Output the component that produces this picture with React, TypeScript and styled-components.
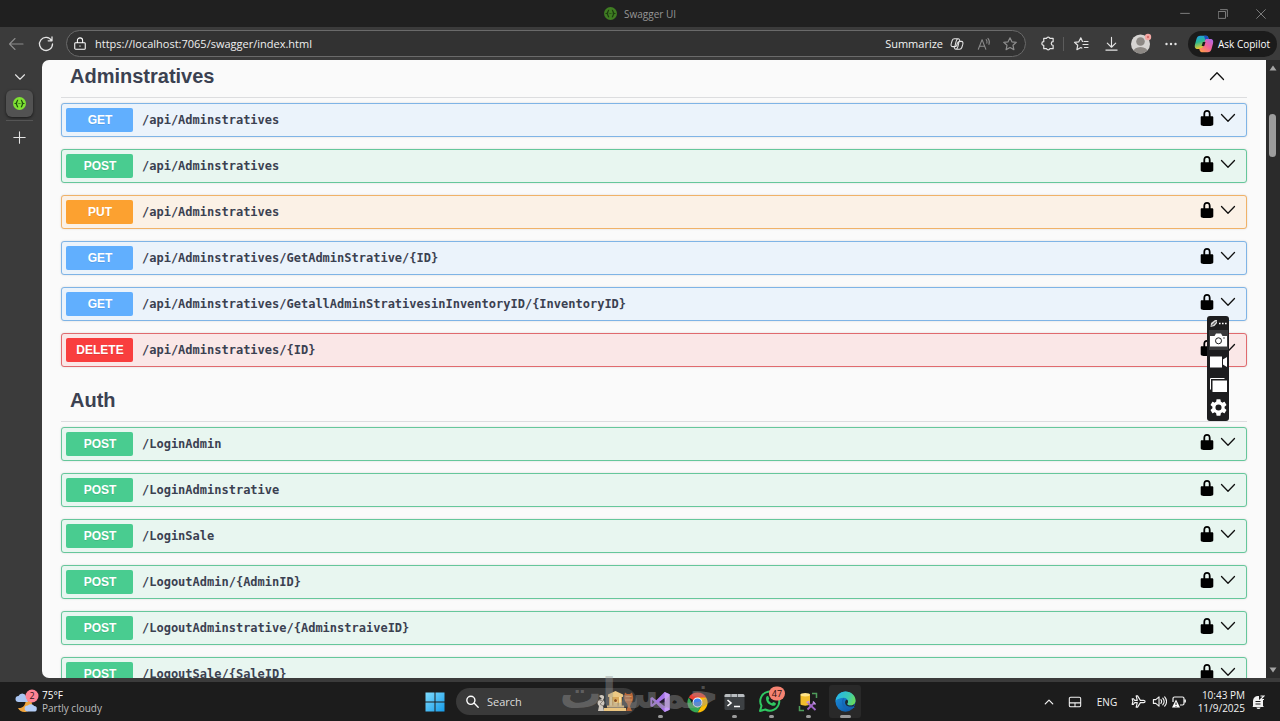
import React from "react";
import styled, { createGlobalStyle } from "styled-components";

const Global = createGlobalStyle`
  * { box-sizing: border-box; }
  html, body { margin: 0; padding: 0; background: #1c1c1c; }
  button, input { font: inherit; color: inherit; border: 0; padding: 0; margin: 0; background: none; outline: 0; }
  button { cursor: pointer; }
  svg { display: block; flex: none; }
`;

const ui = `"Open Sans", "Noto Sans", sans-serif`;

const Screen = styled.div`
  position: relative;
  display: flex;
  flex-direction: column;
  height: 100vh;
  overflow: hidden;
  background: #3b3b3b;
  color: #fff;
  font-family: ${ui};
  font-size: 11px;
`;

/* ---------- title bar ---------- */
const TitleBar = styled.header`
  display: grid;
  grid-template-columns: 1fr auto 1fr;
  align-items: center;
  flex: none;
  height: 27px;
  background: #202020;
  color: #969696;
  font-size: 10px;
`;
const Title = styled.div`
  grid-column: 2;
  display: flex;
  align-items: center;
  gap: 7px;
`;
const WindowButtons = styled.div`
  display: flex;
  justify-content: flex-end;
`;
const WindowButton = styled.button`
  display: grid;
  place-items: center;
  width: 38px;
  height: 27px;
  color: #7c7c7c;
`;

/* ---------- toolbar ---------- */
const Toolbar = styled.nav`
  display: flex;
  align-items: center;
  flex: none;
  height: 33px;
  padding: 0 3px 0 1px;
`;
const IconButton = styled.button<{ $dim?: boolean; $w?: number }>`
  display: grid;
  place-items: center;
  flex: none;
  width: ${(p) => p.$w ?? 30}px;
  height: 26px;
  color: ${(p) => (p.$dim ? "#8c8c8c" : "#e4e4e4")};
`;
const Address = styled.div`
  display: flex;
  align-items: center;
  flex: 1;
  min-width: 0;
  height: 27px;
  margin: 0 6px 0 5px;
  padding: 0 2px 0 6px;
  border: 1px solid #6a6a6a;
  border-radius: 14px;
  background: #323232;
`;
const AddressInput = styled.input`
  flex: 1;
  min-width: 0;
  margin-left: 8px;
  font-size: 11px;
  color: #efefef;
`;
const Summarize = styled.button`
  font-size: 11px;
  color: #f2f2f2;
`;
const Separator = styled.span`
  width: 1px;
  height: 14px;
  margin: 0 2px 0 1px;
  background: #5c5c5c;
`;
const AskCopilot = styled.button`
  display: flex;
  align-items: center;
  gap: 4px;
  flex: none;
  width: 89px;
  height: 26px;
  margin-left: 2px;
  padding-left: 6px;
  border-radius: 13px;
  background: #1b1b1b;
  font-size: 10px;
  white-space: nowrap;
`;

/* ---------- body ---------- */
const Body = styled.div`
  display: flex;
  flex: 1;
  min-height: 0;
  padding-bottom: 4px;
`;
const Sidebar = styled.aside`
  display: flex;
  flex-direction: column;
  align-items: center;
  flex: none;
  width: 42px;
  padding: 4px 3px 0 0;
`;
const Tab = styled.button`
  display: grid;
  place-items: center;
  width: 27px;
  height: 27px;
  border-radius: 6px;
  background: #525252;
  box-shadow: 0 1px 3px rgba(0, 0, 0, 0.6);
`;
const TabLine = styled.span`
  width: 27px;
  height: 1px;
  margin: 3px 0;
  background: #555;
`;
const Page = styled.main`
  flex: 1;
  min-width: 0;
  overflow: hidden;
  border-radius: 7px 0 0 7px;
  background: #fafafa;
  color: #3b4151;
`;
const Sections = styled.div`
  margin-top: -5px;
  padding: 0 19px;
`;
const TagHeader = styled.button`
  display: flex;
  align-items: center;
  justify-content: space-between;
  width: 100%;
  height: 43px;
  margin-bottom: 5px;
  padding: 0 22px 0 9px;
  border-bottom: 1px solid #dcdddf;
  color: #3b4151;
`;
const TagTitle = styled.h3`
  margin: 0;
  font: bold 20px/24px "Liberation Sans", sans-serif;
`;

type Method = "GET" | "POST" | "PUT" | "DELETE";
const palette: Record<Method, { main: string; line: string; tint: string }> = {
  GET: { main: "#61affe", line: "#7fb4e6", tint: "#ebf3fb" },
  POST: { main: "#49cc90", line: "#66c79b", tint: "#e8f6f0" },
  PUT: { main: "#fca130", line: "#f0b268", tint: "#fbf1e6" },
  DELETE: { main: "#f93e3e", line: "#e06a6e", tint: "#fae7e7" },
};

const Operation = styled.div<{ $method: Method }>`
  display: flex;
  align-items: center;
  height: 34px;
  margin-bottom: 12px;
  padding: 0 7px 0 4px;
  border: 1px solid ${(p) => palette[p.$method].line};
  border-radius: 3px;
  background: ${(p) => palette[p.$method].tint};
  box-shadow: 0 0 2px rgba(0, 0, 0, 0.15);
`;
const Summary = styled.button`
  display: flex;
  align-items: center;
  flex: 1;
  min-width: 0;
  text-align: left;
`;
const MethodBadge = styled.span<{ $method: Method }>`
  width: 67px;
  padding-left: 1px;
  border-radius: 2px;
  background: ${(p) => palette[p.$method].main};
  color: #fff;
  font: bold 12px/24px "Liberation Sans", sans-serif;
  text-align: center;
  text-shadow: 0 1px 0 rgba(0, 0, 0, 0.1);
`;
const Path = styled.span`
  padding-left: 9px;
  color: #3b4151;
  font: bold 12px/24px "DejaVu Sans Mono", monospace;
`;
const RowIcon = styled.button<{ $w: number }>`
  display: grid;
  place-items: center;
  width: ${(p) => p.$w}px;
  height: 24px;
  padding-bottom: 4px;
  color: #000;
`;

const Scrollbar = styled.div`
  display: flex;
  flex-direction: column;
  align-items: center;
  flex: none;
  width: 14px;
  padding: 5px 1px 5px 0;
  background: #2b2b2b;
`;
const Thumb = styled.span`
  width: 7px;
  height: 43px;
  margin: 43px 0 auto;
  border-radius: 4px;
  background: #9d9d9d;
`;

/* ---------- capture tool floating over the page ---------- */
const CaptureBar = styled.div`
  position: absolute;
  top: 316px;
  right: 51px;
  display: flex;
  flex-direction: column;
  align-items: center;
  width: 22px;
  height: 105px;
  padding-top: 1px;
  border-radius: 3px;
  background: #1d1d1f;
`;
const CaptureButton = styled.button<{ $active?: boolean; $h?: number }>`
  display: grid;
  place-items: center;
  width: 19px;
  height: ${(p) => p.$h ?? 23}px;
  background: ${(p) => (p.$active ? "#3a3a3c" : "none")};
`;

/* ---------- taskbar ---------- */
const Taskbar = styled.footer`
  display: grid;
  grid-template-columns: 1fr auto 1fr;
  align-items: center;
  flex: none;
  height: 39px;
  background: #1c1c1c;
`;
const Weather = styled.button`
  display: flex;
  align-items: center;
  gap: 3px;
  padding-left: 15px;
  text-align: left;
  font-size: 10px;
  line-height: 13px;
`;
const Muted = styled.span`
  display: block;
  color: #bdbdbd;
`;
const Dock = styled.div`
  display: flex;
  align-items: center;
  gap: 5px;
`;
const DockItem = styled.button<{ $active?: boolean }>`
  display: flex;
  flex-direction: column;
  align-items: center;
  justify-content: flex-end;
  gap: 2px;
  width: 32px;
  height: 33px;
  border-radius: 3px;
  background: ${(p) => (p.$active ? "#292929" : "none")};
`;
const Running = styled.span<{ $wide?: boolean; $off?: boolean }>`
  width: ${(p) => (p.$wide ? 11 : 5)}px;
  height: 3px;
  border-radius: 2px;
  background: ${(p) => (p.$off ? "transparent" : "#9a9a9a")};
`;
const StartButton = styled.button`
  display: grid;
  place-items: center;
  width: 32px;
  height: 33px;
`;
const SearchBox = styled.label`
  display: flex;
  align-items: center;
  gap: 8px;
  width: 181px;
  height: 27px;
  margin-right: 2px;
  padding: 0 3px 0 10px;
  border-radius: 14px;
  background: #3a3a3a;
`;
const SearchInput = styled.input`
  flex: 1;
  min-width: 0;
  font-size: 11px;
  &::placeholder { color: #dcdcdc; opacity: 1; }
`;
const Tray = styled.div`
  display: flex;
  align-items: center;
  justify-content: flex-end;
  padding-right: 14px;
  font-size: 10px;
  color: #f2f2f2;
`;
const TrayButton = styled.button<{ $w: number }>`
  display: grid;
  place-items: center;
  width: ${(p) => p.$w}px;
  height: 30px;
`;
const Clock = styled.button`
  width: 50px;
  margin: 0 5px 0 6px;
  line-height: 13px;
  text-align: right;
  white-space: nowrap;
`;
const Watermark = styled.div`
  position: absolute;
  right: 561px;
  bottom: 5px;
  color: rgba(150, 150, 150, 0.42);
  font: bold 42px/44px "DejaVu Sans", sans-serif;
  white-space: nowrap;
  pointer-events: none;
`;

/* ---------- icons ---------- */
const Line = ({ size = 14, w = 1.2, d, vb = 16 }: { size?: number; w?: number; d: string; vb?: number }) => (
  <svg width={size} height={size} viewBox={`0 0 ${vb} ${vb}`} fill="none" stroke="currentColor" strokeWidth={w} strokeLinecap="round" strokeLinejoin="round">
    <path d={d} />
  </svg>
);

const SwaggerIcon = ({ color, ink }: { color: string; ink: string }) => (
  <svg width="13" height="13" viewBox="0 0 24 24">
    <circle cx="12" cy="12" r="12" fill={color} />
    <path d="M9.5 5.500C6.600 5.500 8.300 11 5 12c3.300 1 1.600 6.500 4.500 6.500M14.500 5.500c2.900 0 1.200 5.500 4.500 6.500-3.300 1-1.600 6.500-4.500 6.500" fill="none" stroke={ink} strokeWidth="2.200" />
    <path d="M9 12h1M11.600 12h1M14.200 12h1" stroke={ink} strokeWidth="2" />
  </svg>
);

const LockSolid = () => (
  <svg width="18" height="18" viewBox="0 0 20 20" fill="currentColor">
    <path d="M15.8 8H14V5.600C14 2.703 12.665 1 10 1 7.334 1 6 2.703 6 5.600V8H4c-.553 0-1 .646-1 1.199V17c0 .549.428 1.139.951 1.307l1.197.387C5.672 18.861 6.550 19 7.100 19h5.800c.549 0 1.428-.139 1.951-.307l1.196-.387c.524-.167.953-.757.953-1.306V9.199C17 8.646 16.352 8 15.800 8zM12 8H8V5.199C8 3.754 8.797 3 10 3c1.203 0 2 .754 2 2.199V8z" />
  </svg>
);

const Chevron = ({ up }: { up?: boolean }) => (
  <svg width="16" height="10" viewBox="0 0 16 10" fill="none" stroke="#111" strokeWidth="1.300" strokeLinecap="round" strokeLinejoin="round">
    <path d={up ? "M1.500 8.500L8 1.800l6.500 6.700" : "M1.500 1.500L8 8.200l6.500-6.700"} />
  </svg>
);

const CopilotIcon = () => (
  <svg width="20" height="18" viewBox="0 0 24 22">
    <defs>
      <linearGradient id="cpA" x1="0" y1="0" x2="0.300" y2="1">
        <stop offset="0" stopColor="#1f9bf0" />
        <stop offset="0.500" stopColor="#2bb98f" />
        <stop offset="1" stopColor="#f0c92b" />
      </linearGradient>
      <linearGradient id="cpB" x1="1" y1="0" x2="0.200" y2="1">
        <stop offset="0" stopColor="#a66bf0" />
        <stop offset="0.500" stopColor="#ef5f9d" />
        <stop offset="1" stopColor="#ff9a4a" />
      </linearGradient>
    </defs>
    <path d="M7.500 1h7.200c1.500 0 2.200 1 2.700 2.600l.7 2.400h-2.300c-1.800 0-2.500 1-3 2.600l-2 6.400c-.5 1.500-1.300 2-2.800 2H4.500C1 17 .2 14.500 1 11.500l1.900-6.800C3.600 2.200 5 1 7.500 1z" fill="url(#cpA)" />
    <path d="M14.700 1c1.500 0 2.200 1 2.700 2.600l.7 2.400h-4.600l-1-3.500C12.200 1.600 11.800 1 11 1z" fill="#1d4fc4" />
    <path d="M16.500 21H9.300c-1.500 0-2.200-1-2.700-2.600L5.900 16h2.300c1.800 0 2.500-1 3-2.600l2-6.400c.5-1.500 1.300-2 2.800-2h3.500c3.500 0 4.300 2.500 3.500 5.500l-1.900 6.800C20.400 19.800 19 21 16.500 21z" fill="url(#cpB)" />
    <path d="M10.600 8.500h3.200l-1.500 5h-3.200z" fill="#1b1b1b" />
  </svg>
);

const Avatar = () => (
  <svg width="22" height="22" viewBox="0 0 22 22">
    <defs><clipPath id="avatarClip"><circle cx="10.500" cy="11" r="9.500" /></clipPath></defs>
    <circle cx="10.500" cy="11" r="9.500" fill="#d6d4d2" />
    <g clipPath="url(#avatarClip)" fill="#8d8985">
      <circle cx="10.500" cy="8.500" r="4.300" />
      <ellipse cx="10.500" cy="19.500" rx="7.500" ry="5.500" />
    </g>
    <circle cx="18" cy="4" r="3.200" fill="#f3a9a5" />
    <circle cx="18" cy="4" r="1.200" fill="#d9716e" />
  </svg>
);

const Gear = () => (
  <svg width="17" height="17" viewBox="2 2 20 20" fill="#fff">
    <path d="M19.140 12.940c.04-.3.06-.61.06-.94 0-.32-.02-.64-.07-.94l2.030-1.580a.49.49 0 0 0 .12-.61l-1.920-3.320a.49.49 0 0 0-.59-.22l-2.390.96a7 7 0 0 0-1.620-.94l-.36-2.540a.48.48 0 0 0-.48-.41h-3.840c-.24 0-.43.17-.47.41l-.36 2.540c-.59.24-1.130.57-1.620.94l-2.390-.96a.49.49 0 0 0-.59.22L2.740 8.870c-.12.21-.08.47.12.61l2.030 1.580c-.05.3-.09.63-.09.94s.02.64.07.94l-2.030 1.580a.49.49 0 0 0-.12.61l1.920 3.320c.12.22.37.29.59.22l2.390-.96c.5.38 1.030.7 1.620.94l.36 2.540c.05.24.24.41.48.41h3.840c.24 0 .44-.17.47-.41l.36-2.540a7 7 0 0 0 1.620-.94l2.390.96c.22.08.47 0 .59-.22l1.920-3.320a.49.49 0 0 0-.12-.61l-2.010-1.580zM12 15.600a3.600 3.600 0 1 1 0-7.200 3.600 3.600 0 0 1 0 7.200z" />
  </svg>
);

const WeatherIcon = () => (
  <svg width="24" height="26" viewBox="0 0 24 26">
    <path d="M10.500 10c1 6-3 9.500-7.500 9 2 4.500 7.500 5 11 2.500 3.500-2.600 4-8.500 1-11.500-1.300-1-3-.9-4.500 0z" fill="#f0a43c" />
    <path d="M3.500 13a3 3 0 0 1 0-6A4 4 0 0 1 11 7l2 6z" fill="#a9c5f2" />
    <path d="M12.500 22.500a3 3 0 0 1 .3-6 4 4 0 0 1 6.400.6 2.700 2.700 0 0 1-.2 5.400z" fill="#b4cdf6" />
    <circle cx="17" cy="7" r="6.500" fill="#ff8494" />
    <text x="17" y="10" textAnchor="middle" fontSize="9" fontFamily="Open Sans, sans-serif" fill="#331418">2</text>
  </svg>
);

const WindowsIcon = () => (
  <svg width="20" height="20" viewBox="0 0 20 20">
    <defs>
      <linearGradient id="win" x1="0" y1="0" x2="1" y2="1">
        <stop offset="0" stopColor="#7fdcff" />
        <stop offset="1" stopColor="#159be8" />
      </linearGradient>
    </defs>
    <path d="M.5.500h9v9h-9zM10.500.500h9v9h-9zM.5 10.500h9v9h-9zM10.500 10.500h9v9h-9z" fill="url(#win)" />
  </svg>
);

const TempleIcon = () => (
  <svg width="38" height="23" viewBox="0 0 38 23">
    <path d="M3 6c2-2 6-1 5 2l-1 2c2 2 2 4 0 6l1 5H2l1-5c-2-2-2-4 0-6l3-1z" fill="#cfc8be" />
    <path d="M3 10l4 1-3 3 3 2" stroke="#8d857c" fill="none" />
    <path d="M12 4.500L19.500 1 27 4.500V7H12z" fill="#edc984" />
    <path d="M13 7h13v9H13z" fill="#d9a85a" />
    <path d="M14 7h2v9h-2zM23 7h2v9h-2z" fill="#f6dc9e" />
    <path d="M17.500 16v-5a2 2 0 0 1 4 0v5z" fill="#f3d08a" />
    <circle cx="19.500" cy="10.500" r="1.500" fill="#8a4d20" />
    <path d="M11 15.500h17v2H11zM8 18h22v3H8z" fill="#ecc680" />
    <path d="M29 2.500L31 4h3l2-1.500c1.500 4 2 8-1 11l-1 3 2 4.500h-6l2-4.500-1-3c-3.500-3-3-7-2-11z" fill="#b9683a" />
    <path d="M29.500 6.500h6M29 10h7" stroke="#dd965e" />
  </svg>
);

const VisualStudioIcon = () => (
  <svg width="22" height="22" viewBox="0 0 24 24">
    <path d="M17 1l5.500 2.500v17L17 23l-9-9-4.500 3.500L1.500 16.500v-9L3.500 6.500 8 10z" fill="#a673e8" />
    <path d="M17 1l5.500 2.500v17L17 23z" fill="#c59bf5" />
    <path d="M17 7.500v9L11 12zM3.500 9.500v5L6 12z" fill="#241a30" />
  </svg>
);

const ChromeIcon = () => (
  <svg width="21" height="21" viewBox="0 0 24 24">
    <path d="M12 12L2.040 6.250A11.500 11.500 0 0 1 21.960 6.250z" fill="#ea4335" />
    <path d="M12 12V6.250h9.960A11.500 11.500 0 0 1 12 23.500l5-8.600z" fill="#fbbc05" />
    <path d="M12 12l5 2.900-5 8.600A11.500 11.500 0 0 1 2.040 6.250l5 8.650z" fill="#34a853" />
    <circle cx="12" cy="12" r="5.700" fill="#fff" />
    <circle cx="12" cy="12" r="4.500" fill="#3f83ee" />
  </svg>
);

const TerminalIcon = () => (
  <svg width="21" height="20" viewBox="0 0 21 20">
    <rect x="0.500" y="1" width="20" height="16" rx="1.500" fill="#3d4144" />
    <path d="M.5 4V2.500A1.500 1.500 0 0 1 2 1h17a1.500 1.500 0 0 1 1.500 1.500V4z" fill="#b8bcbf" />
    <path d="M7 1v3M13.500 1v3" stroke="#5d6164" />
    <path d="M3.500 7l3.500 3-3.500 3M10 13.500h6" fill="none" stroke="#fff" strokeWidth="1.600" />
  </svg>
);

const WhatsAppIcon = () => (
  <svg width="28" height="27" viewBox="0 0 28 27">
    <path d="M3 25l1.500-5.200A9.500 9.500 0 1 1 8.300 23.500z" fill="none" stroke="#2fc861" strokeWidth="2" strokeLinejoin="round" />
    <path d="M9.300 11c.6-1.300 1.700-1.300 2.100-.5l.8 1.900c.1.500-.8 1.300-.8 1.600.8 1.600 2 2.600 3.600 3.200.4 0 1-1.200 1.500-1.100l2 .9c.7.400.3 1.700-.3 2.200-1.500 1.200-4 .5-6-.9-1.900-1.400-3.900-4.300-2.900-7.300z" fill="#2fc861" />
    <rect x="12" y="0.500" width="16" height="14" rx="7" fill="#f58372" />
    <text x="20" y="11" textAnchor="middle" fontSize="9" fontFamily="Open Sans, sans-serif" fill="#2b0f0b">47</text>
  </svg>
);

const SqlIcon = () => (
  <svg width="20" height="21" viewBox="0 0 20 21">
    <path d="M14 1.500h4.500V6M1.500 14v4.500H6" fill="none" stroke="#4f9d5b" strokeWidth="1.500" />
    <path d="M2.500 2.500h9.500v10c-2 1.500-7.500 1.500-9.500 0z" fill="#f2bd2c" />
    <ellipse cx="7.250" cy="2.700" rx="4.750" ry="1.700" fill="#ffe489" />
    <path d="M9.500 17.500l7-7M10 11l7.500 7" stroke="#a166c9" strokeWidth="1.800" />
    <path d="M8.500 10.500l3-1M15 9.500l2.500 3" stroke="#c193e2" strokeWidth="1.500" />
  </svg>
);

const EdgeIcon = () => (
  <svg width="21" height="22" viewBox="0 0 24 25">
    <defs>
      <linearGradient id="edgeTop" x1="0" y1="0.300" x2="1" y2="0.600">
        <stop offset="0" stopColor="#26b5ea" />
        <stop offset="0.600" stopColor="#39c9b4" />
        <stop offset="1" stopColor="#6bdc58" />
      </linearGradient>
      <linearGradient id="edgeLow" x1="0" y1="0" x2="1" y2="1">
        <stop offset="0" stopColor="#1b93e0" />
        <stop offset="1" stopColor="#0c4f9f" />
      </linearGradient>
    </defs>
    <circle cx="12" cy="12" r="11.500" fill="url(#edgeLow)" />
    <path d="M.7 11C1.300 4.800 6.200.500 12 .500c6.500 0 11.500 4.800 11.500 10.300 0 3.600-2.700 5.700-5.700 5.700-2.300 0-4-.8-4-1.800 0-.7 1.100-1 1.100-2.900 0-2.300-2-4.300-4.900-4.300C6 7.500 2.500 9 .7 11z" fill="url(#edgeTop)" />
    <path d="M10 8.500c-2.500 2.500-2 9 4 10.800 3 .9 6 .1 8-1.100" fill="none" stroke="#1565b4" strokeWidth="1.600" />
    <path d="M14.900 11.800c0 1.900-1.100 2.200-1.100 2.900 0 1 1.700 1.800 4 1.800 2 0 3.600-.8 4.600-2.100l-.8 2.400c-2.300 1.500-6.600 1.200-8.900-.6-2-2.300-1.200-5 .2-6.200 1.200.2 2 1 2 1.800z" fill="#1d2a33" />
  </svg>
);

/* ---------- data ---------- */
const sections: { name: string; open: boolean; operations: [Method, string][] }[] = [
  {
    name: "Adminstratives",
    open: true,
    operations: [
      ["GET", "/api/Adminstratives"],
      ["POST", "/api/Adminstratives"],
      ["PUT", "/api/Adminstratives"],
      ["GET", "/api/Adminstratives/GetAdminStrative/{ID}"],
      ["GET", "/api/Adminstratives/GetallAdminStrativesinInventoryID/{InventoryID}"],
      ["DELETE", "/api/Adminstratives/{ID}"],
    ],
  },
  {
    name: "Auth",
    open: true,
    operations: [
      ["POST", "/LoginAdmin"],
      ["POST", "/LoginAdminstrative"],
      ["POST", "/LoginSale"],
      ["POST", "/LogoutAdmin/{AdminID}"],
      ["POST", "/LogoutAdminstrative/{AdminstraiveID}"],
      ["POST", "/LogoutSale/{SaleID}"],
    ],
  },
];

const star = "M8 1.800l1.900 4 4.400.5-3.300 3 .9 4.300L8 11.500l-3.900 2.100.9-4.300-3.300-3 4.400-.5z";

export default function App() {
  return (
    <Screen>
      <Global />
      <TitleBar>
        <Title>
          <SwaggerIcon color="#3f7d22" ink="#1c3a10" />
          Swagger UI
        </Title>
        <WindowButtons>
          <WindowButton aria-label="Minimize"><Line size={10} d="M1 7h14" w={1.600} /></WindowButton>
          <WindowButton aria-label="Restore"><Line size={10} d="M1 4h11v11H1zM4 1h11v11" w={1.600} /></WindowButton>
          <WindowButton aria-label="Close"><Line size={10} d="M1 1l14 14M15 1L1 15" w={1.600} /></WindowButton>
        </WindowButtons>
      </TitleBar>

      <Toolbar aria-label="Browser">
        <IconButton $dim aria-label="Back"><Line size={16} d="M15 8H1.500M7 2.500L1.500 8 7 13.500" w={1.100} /></IconButton>
        <IconButton aria-label="Reload"><Line size={16} d="M13.500 4.500A6.500 6.500 0 1 0 14.500 8M14 1v3.800h-3.800" w={1.300} /></IconButton>
        <Address>
          <Line d="M3 6.500h10a1 1 0 0 1 1 1V13a1 1 0 0 1-1 1H3a1 1 0 0 1-1-1V7.500a1 1 0 0 1 1-1zM5 6.500V4a3 3 0 0 1 6 0v2.500M8 10v.6" />
          <AddressInput aria-label="Address" defaultValue="https://localhost:7065/swagger/index.html" />
          <Summarize>Summarize</Summarize>
          <IconButton $w={28} aria-label="Copilot summary">
            <Line d="M5 2h4.500c1 0 1.300.8 1.500 1.800L11.300 5H13c2 0 2 2 1.600 3.500l-1.100 3.500c-.5 1.500-1 2-2.500 2H6.500c-1 0-1.300-.8-1.500-1.800L4.700 11H3c-2 0-2-2-1.600-3.500L2.500 4C3 2.500 3.500 2 5 2zM11.300 5c-2 0-2.300.5-2.800 2l-1 3c-.4 1-.8 1-2.800 1M9.500 2c-1.500 0-2 1-2.500 3l-1.500 6M6.500 14c1.500 0 2-1 2.500-3l1.500-6" />
          </IconButton>
          <IconButton $dim $w={26} aria-label="Read aloud"><Line d="M1.500 14L5.800 3l4.300 11M3 10.500h5.600M10.500 3c1 1 1.200 2.500.8 4M12.500 1.500c1.800 2 2 4.500 1.200 7" /></IconButton>
          <IconButton $dim $w={26} aria-label="Favorite"><Line size={16} d={star} /></IconButton>
        </Address>
        <IconButton aria-label="Extensions"><Line size={15} d="M4 2.500h3a1.800 1.800 0 0 1 3.500 0H14V6a2 2 0 1 0 0 4v3.500h-3.500a1.800 1.800 0 0 1-3.500 0H4V10a2 2 0 1 1 0-4z" w={1.300} /></IconButton>
        <Separator />
        <IconButton aria-label="Favorites list"><Line size={16} d="M9.500 5.500L7.800 1.800 5.800 5.800l-4.300.5 3.200 3-.8 4.400 3.900-2.200 1 .6M11 5.500h4M10 8.500h5M11.500 11.500H15" /></IconButton>
        <IconButton aria-label="Downloads"><Line size={15} d="M8 1.500v10M3.500 7.500L8 12l4.500-4.500M2 15h12" /></IconButton>
        <IconButton aria-label="Profile"><Avatar /></IconButton>
        <IconButton aria-label="More">
          <svg width="12" height="4" viewBox="0 0 12 4" fill="currentColor"><circle cx="1.500" cy="2" r="1.200" /><circle cx="6" cy="2" r="1.200" /><circle cx="10.500" cy="2" r="1.200" /></svg>
        </IconButton>
        <AskCopilot><CopilotIcon />Ask Copilot</AskCopilot>
      </Toolbar>

      <Body>
        <Sidebar>
          <IconButton $w={27} aria-label="Tab list"><Line size={12} d="M2 5l6 6 6-6" w={1.500} /></IconButton>
          <Tab aria-label="Swagger UI tab"><SwaggerIcon color="#7fe233" ink="#1c4b0d" /></Tab>
          <TabLine />
          <IconButton $w={27} aria-label="New tab"><Line size={13} d="M8 1v14M1 8h14" w={1.300} /></IconButton>
        </Sidebar>

        <Page>
          <Sections>
            {sections.map((s, i) => (
              <section key={s.name}>
                <TagHeader aria-expanded={s.open}>
                  <TagTitle>{s.name}</TagTitle>
                  <Chevron up={s.open} />
                </TagHeader>
                {s.operations.map(([method, path], n) => (
                  <Operation key={`${i}-${n}`} $method={method}>
                    <Summary>
                      <MethodBadge $method={method}>{method}</MethodBadge>
                      <Path>{path}</Path>
                    </Summary>
                    <RowIcon $w={20} aria-label="Authorize"><LockSolid /></RowIcon>
                    <RowIcon $w={22} aria-label="Expand"><Chevron /></RowIcon>
                  </Operation>
                ))}
              </section>
            ))}
          </Sections>
        </Page>

        <Scrollbar>
          <svg width="8" height="6" viewBox="0 0 8 6"><path d="M4 .5L7.500 5.500h-7z" fill="#a4a4a4" /></svg>
          <Thumb />
          <svg width="8" height="6" viewBox="0 0 8 6"><path d="M4 5.500L7.500.5h-7z" fill="#a4a4a4" /></svg>
        </Scrollbar>
      </Body>

      <CaptureBar>
        <CaptureButton $h={13} aria-label="Capture menu">
          <svg width="18" height="9" viewBox="0 0 18 9">
            <path d="M1.500 8L2 4l4-3h2v3L5.500 7z" fill="#d8d8d8" />
            <path d="M3 6.500l4-4" stroke="#1d1d1f" />
            <path d="M10 4.500h1.600M13 4.500h1.600M16 4.500h1.600" stroke="#fff" strokeWidth="1.500" />
          </svg>
        </CaptureButton>
        <CaptureButton $active $h={20} aria-label="Take screenshot">
          <svg width="17" height="14" viewBox="0 0 17 14">
            <path d="M0 3h4.500L6 .5h5L12.500 3H17v10.500H0z" fill="#fff" />
            <circle cx="8.500" cy="7.800" r="3" fill="none" stroke="#1d1d1f" />
            <circle cx="14" cy="5" r=".7" fill="#1d1d1f" />
          </svg>
        </CaptureButton>
        <CaptureButton aria-label="Record video">
          <svg width="17" height="12" viewBox="0 0 17 12"><path d="M0 .5h12v3.500L17 1v10l-5-3v3.500H0z" fill="#fff" /><path d="M12.500 2v8" stroke="#1d1d1f" /></svg>
        </CaptureButton>
        <CaptureButton aria-label="Gallery">
          <svg width="17" height="14" viewBox="0 0 17 14"><path d="M.5 11.500V.5h14" fill="none" stroke="#fff" /><path d="M2.500 2.500H17V14H2.500z" fill="#fff" /></svg>
        </CaptureButton>
        <CaptureButton aria-label="Settings"><Gear /></CaptureButton>
      </CaptureBar>

      <Taskbar>
        <Weather>
          <WeatherIcon />
          <span>75°F<Muted>Partly cloudy</Muted></span>
        </Weather>
        <Dock>
          <StartButton aria-label="Start"><WindowsIcon /></StartButton>
          <SearchBox>
            <Line size={13} d="M11 6.500a5 5 0 1 1-10 0 5 5 0 0 1 10 0zM10.200 10.200L15 15" w={1.700} />
            <SearchInput aria-label="Search" placeholder="Search" />
            <TempleIcon />
          </SearchBox>
          <DockItem aria-label="Visual Studio"><VisualStudioIcon /><Running /></DockItem>
          <DockItem aria-label="Chrome"><ChromeIcon /><Running $off /></DockItem>
          <DockItem aria-label="Terminal"><TerminalIcon /><Running /></DockItem>
          <DockItem aria-label="WhatsApp"><WhatsAppIcon /><Running /></DockItem>
          <DockItem aria-label="SQL Server"><SqlIcon /><Running /></DockItem>
          <DockItem $active aria-label="Edge"><EdgeIcon /><Running $wide /></DockItem>
        </Dock>
        <Tray>
          <TrayButton $w={26} aria-label="Hidden icons"><Line size={10} d="M2 11l6-6 6 6" w={2} /></TrayButton>
          <TrayButton $w={26} aria-label="Touchpad"><Line size={14} d="M3 2.500h10a1.500 1.500 0 0 1 1.500 1.500v8a1.500 1.500 0 0 1-1.500 1.500H3A1.500 1.500 0 0 1 1.500 12V4A1.500 1.500 0 0 1 3 2.500zM1.500 9h13M8 9v4.500" /></TrayButton>
          <TrayButton $w={38}>ENG</TrayButton>
          <TrayButton $w={24} aria-label="Airplane mode"><Line size={15} d="M15 8c0-.8-.8-1.200-1.500-1.200H10L7 2H5.500l1.200 4.800H4L2.500 5H1.200L2 8l-.8 3h1.300L4 9.200h2.700L5.500 14H7l3-4.800h3.500c.7 0 1.500-.4 1.500-1.200z" /></TrayButton>
          <TrayButton $w={18} aria-label="Volume"><Line size={15} d="M1.500 6v4H4l3.500 3V3L4 6zM9.500 6c.9 1.200.9 2.800 0 4M11.500 4.500c1.700 2 1.700 5 0 7M13.500 3c2.500 3 2.500 7 0 10" /></TrayButton>
          <TrayButton $w={21} aria-label="Battery">
            <svg width="14" height="13" viewBox="0 0 14 13">
              <path d="M1 7V3.500A1.500 1.500 0 0 1 2.500 2h8A1.500 1.500 0 0 1 12 3.500v5a1.500 1.500 0 0 1-1.500 1.500H8M13.300 4.500v3" fill="none" stroke="#f2f2f2" strokeWidth="1.200" />
              <path d="M4 4.500l4 8H0z" fill="#fff" />
              <path d="M4 7.500v2.500M4 11v.8" stroke="#1c1c1c" />
            </svg>
          </TrayButton>
          <Clock>10:43 PM<br />11/9/2025</Clock>
          <TrayButton $w={16} aria-label="Notifications">
            <svg width="13" height="14" viewBox="0 0 13 14">
              <path d="M1 11V6a5 5 0 0 1 6-5v4h4v6l1 1H.5zM4.500 12.500h4c-.3 2-3.700 2-4 0z" fill="#f2f2f2" />
              <path d="M8.500 1H12L8.500 4.500H12" fill="none" stroke="#f2f2f2" strokeWidth="1.200" />
              <path d="M3.500 6.500h5M3.500 9h5" stroke="#1c1c1c" />
            </svg>
          </TrayButton>
        </Tray>
      </Taskbar>

      <Watermark lang="ar" dir="rtl">خمسات</Watermark>
    </Screen>
  );
}
